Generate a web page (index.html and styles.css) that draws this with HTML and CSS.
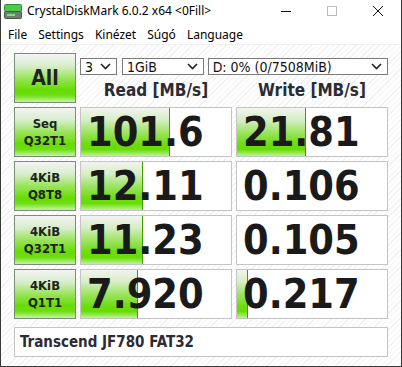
FILE: index.html
```html
<!DOCTYPE html>
<html>
    <head>
        <meta charset="UTF-8">
        <title>CrystalDiskMark 6.0.2 x64 &lt;0Fill&gt;</title>
        <link rel="stylesheet" href="styles.css">
    </head>
    <body>
        <div class="window">
            <!-- タイトルバー -->
            <div class="titlebar">
                <svg class="appicon" width="18" height="15" viewBox="0 0 18 15">
                    <rect x="0.5" y="0.5" width="17" height="7" rx="1" fill="#4cc94c" stroke="#2f8f2f"/>
                    <rect x="0.5" y="7.5" width="17" height="7" rx="1" fill="#6f7f6f" stroke="#4a564a"/>
                    <rect x="3" y="10" width="8" height="2" fill="#7fe07f"/>
                </svg>
                <span class="title">CrystalDiskMark 6.0.2 x64 &lt;0Fill&gt;</span>
                <div class="caption">
                    <span class="cap-btn"><svg width="12" height="12" viewBox="0 0 12 12"><line x1="1" y1="6.5" x2="11" y2="6.5" stroke="#111" stroke-width="1"/></svg></span>
                    <span class="cap-btn"><svg width="12" height="12" viewBox="0 0 12 12"><rect x="1.5" y="1.5" width="9" height="9" fill="none" stroke="#bbb" stroke-width="1"/></svg></span>
                    <span class="cap-btn"><svg width="12" height="12" viewBox="0 0 12 12"><path d="M1 1 L11 11 M11 1 L1 11" stroke="#111" stroke-width="1"/></svg></span>
                </div>
            </div>

            <!-- メニュー -->
            <div class="menubar">
                <span>File</span>
                <span>Settings</span>
                <span>Kinézet</span>
                <span>Súgó</span>
                <span>Language</span>
            </div>

            <div class="contents">
                <div class="board">
                    <div class="btn all">All</div>
                    <div class="head">
                        <div class="combos">
                            <div class="combo c-count"><span>3</span><svg width="11" height="7" viewBox="0 0 11 7"><polyline points="1,1 5.5,5.5 10,1" fill="none" stroke="#222" stroke-width="1.6"/></svg></div>
                            <div class="combo c-size"><span>1GiB</span><svg width="11" height="7" viewBox="0 0 11 7"><polyline points="1,1 5.5,5.5 10,1" fill="none" stroke="#222" stroke-width="1.6"/></svg></div>
                            <div class="combo c-drive"><span>D: 0% (0/7508MiB)</span><svg width="11" height="7" viewBox="0 0 11 7"><polyline points="1,1 5.5,5.5 10,1" fill="none" stroke="#222" stroke-width="1.6"/></svg></div>
                        </div>
                        <div class="titles">
                            <div class="coltitle">Read [MB/s]</div>
                            <div class="coltitle">Write [MB/s]</div>
                        </div>
                    </div>

                    <div class="btn label">Seq<br>Q32T1</div>
                    <div class="cell"><div class="bar" style="width:59%"></div><span class="num">101.6</span></div>
                    <div class="cell"><div class="bar" style="width:46%"></div><span class="num">21.81</span></div>

                    <div class="btn label">4KiB<br>Q8T8</div>
                    <div class="cell"><div class="bar" style="width:41%"></div><span class="num">12.11</span></div>
                    <div class="cell"><span class="num">0.106</span></div>

                    <div class="btn label">4KiB<br>Q32T1</div>
                    <div class="cell"><div class="bar" style="width:41%"></div><span class="num">11.23</span></div>
                    <div class="cell"><span class="num">0.105</span></div>

                    <div class="btn label">4KiB<br>Q1T1</div>
                    <div class="cell"><div class="bar" style="width:38%"></div><span class="num">7.920</span></div>
                    <div class="cell"><div class="bar" style="width:7%"></div><span class="num">0.217</span></div>
                </div>

                <div class="comment">Transcend JF780 FAT32</div>
            </div>
        </div>
    </body>
</html>
```

FILE: styles.css
```css
* {
    box-sizing: border-box;
}

body {
    margin: 0;
    width: 402px;
    height: 367px;
    overflow: hidden;
    font-family: "Noto Sans", "Open Sans", sans-serif;
}

.window {
    width: 402px;
    height: 367px;
    border: 1px solid #3a3a3a;
    border-top: none;
    background: #fff;
    display: flex;
    flex-direction: column;
}

.titlebar {
    height: 24px;
    display: flex;
    align-items: center;
    padding-left: 3px;
}

.appicon { margin-top: -1px; }

.title {
    margin-left: 5px;
    font-size: 12px;
    color: #000;
    margin-top: -3px;
}

.caption {
    margin-left: auto;
    display: flex;
    height: 24px;
    align-items: center;
    margin-top: -3px;
}

.cap-btn {
    width: 46px;
    display: flex;
    justify-content: center;
}

.menubar {
    height: 21px;
    display: flex;
    align-items: center;
    padding-left: 7px;
    font-size: 12px;
    color: #000;
    border-bottom: 1px solid #f0f0f0;
}

.menubar span { margin-right: 11px; }

.contents {
    flex: 1;
    padding: 8px 13px 0 13px;
    background: repeating-linear-gradient(135deg, #ffffff 0px, #ffffff 3px, #f1f1f1 3px, #f1f1f1 4px);
    font-family: "DejaVu Sans Condensed", "DejaVu Sans", sans-serif;
    font-stretch: condensed;
}

.board {
    display: grid;
    grid-template-columns: 62px 152px 152px;
    grid-auto-rows: 50px;
    column-gap: 4px;
    row-gap: 4px;
}

.btn {
    border: 1px solid #7b8c7b;
    background: linear-gradient(to bottom, #f4f4f4 0%, #d8eecc 25%, #9ae45c 50%, #66dd00 75%, #6ede10 86%, #c4f4a0 100%);
    color: #222;
    font-weight: bold;
    display: flex;
    align-items: center;
    justify-content: center;
    text-align: center;
}

.all { font-size: 21px; }

.label {
    font-size: 13px;
    line-height: 17px;
}

.head {
    grid-column: 2 / 4;
    display: flex;
    flex-direction: column;
}

.combos {
    display: flex;
    gap: 4px;
    margin-top: 5px;
}

.combo {
    height: 17px;
    border: 1px solid #7a7a7a;
    background: #fff;
    display: flex;
    align-items: center;
    justify-content: space-between;
    padding: 0 5px 0 4px;
    font-size: 14px;
    color: #111;
}

.c-count { width: 37px; }
.c-size { width: 82px; margin-left: 1px; }
.c-drive { width: 181px; }

.titles {
    display: flex;
    gap: 4px;
    margin-top: 5px;
}

.coltitle {
    width: 152px;
    text-align: center;
    font-size: 17px;
    font-weight: bold;
    color: #2b2b33;
}

.cell {
    position: relative;
    border: 1px solid #c4c4c4;
    background: #fff;
    display: flex;
    align-items: center;
    overflow: hidden;
}

.bar {
    position: absolute;
    left: 0;
    top: 0;
    bottom: 0;
    border-right: 1px solid #3aa000;
    background: linear-gradient(to bottom, #f2f4f0 0%, #d6eec4 25%, #9ee464 50%, #6edc10 75%, #66dd00 86%, #bdf296 100%);
}

.num {
    position: relative;
    padding-left: 6px;
    font-size: 41px;
    font-weight: bold;
    color: #1a1a1a;
    line-height: 1;
}

.comment {
    margin-top: 8px;
    width: 374px;
    height: 30px;
    border: 1px solid #c4c4c4;
    background: #fff;
    display: flex;
    align-items: center;
    padding-left: 5px;
    font-size: 15px;
    font-weight: bold;
    color: #2b2b33;
}
```
